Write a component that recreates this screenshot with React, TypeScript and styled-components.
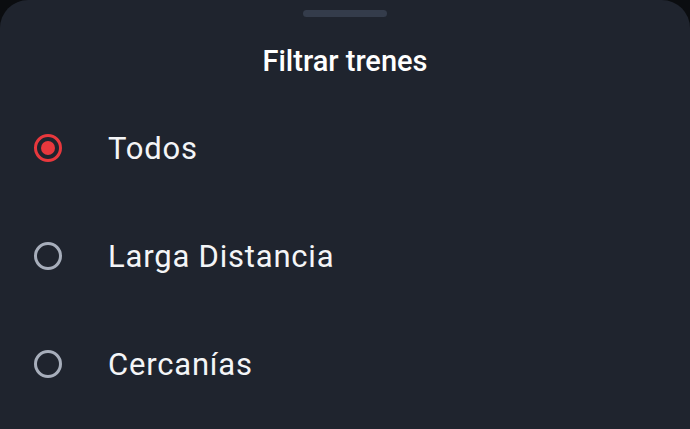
import { useState } from "react";
import styled, { createGlobalStyle } from "styled-components";

const GlobalStyle = createGlobalStyle`
  html, body {
    margin: 0;
    padding: 0;
    background-color: #0b0d10;
  }
  #root {
    height: 429px;
  }
`;

const Sheet = styled.div`
  height: 429px;
  box-sizing: border-box;
  background-color: #1f242e;
  border-radius: 28px 28px 0 0;
  font-family: Roboto, "Noto Sans", sans-serif;
  display: flex;
  flex-direction: column;
  align-items: stretch;
  padding-top: 10px;
  overflow: hidden;
`;

const Handle = styled.div`
  align-self: center;
  width: 84px;
  height: 7px;
  border-radius: 4px;
  background-color: #343c4b;
`;

const Title = styled.h1`
  margin: 27px 0 0;
  text-align: center;
  color: #ffffff;
  font-size: 29px;
  font-weight: 500;
  line-height: 34px;
`;

const Options = styled.div`
  display: flex;
  flex-direction: column;
  margin-top: 16px;
`;

const Row = styled.label`
  display: flex;
  align-items: center;
  height: 108px;
  padding-left: 34px;
  gap: 46px;
  cursor: pointer;
`;

const Radio = styled.span<{ $checked: boolean }>`
  flex: none;
  width: 28px;
  height: 28px;
  box-sizing: border-box;
  border-radius: 50%;
  border: 3px solid ${(p) => (p.$checked ? "#e8383d" : "#a7aebb")};
  display: flex;
  align-items: center;
  justify-content: center;

  &::after {
    content: "";
    width: 14px;
    height: 14px;
    border-radius: 50%;
    background-color: #e8383d;
    display: ${(p) => (p.$checked ? "block" : "none")};
  }
`;

const Label = styled.span`
  color: #f4f5f7;
  font-size: 31px;
  letter-spacing: 0.8px;
`;

const options = ["Todos", "Larga Distancia", "Cercanías"];

export default function App() {
  const [selected, setSelected] = useState(0);
  return (
    <>
      <GlobalStyle />
      <Sheet>
        <Handle />
        <Title>Filtrar trenes</Title>
        <Options>
          {options.map((o, i) => (
            <Row key={o} onClick={() => setSelected(i)}>
              <Radio $checked={selected === i} />
              <Label>{o}</Label>
            </Row>
          ))}
        </Options>
      </Sheet>
    </>
  );
}
